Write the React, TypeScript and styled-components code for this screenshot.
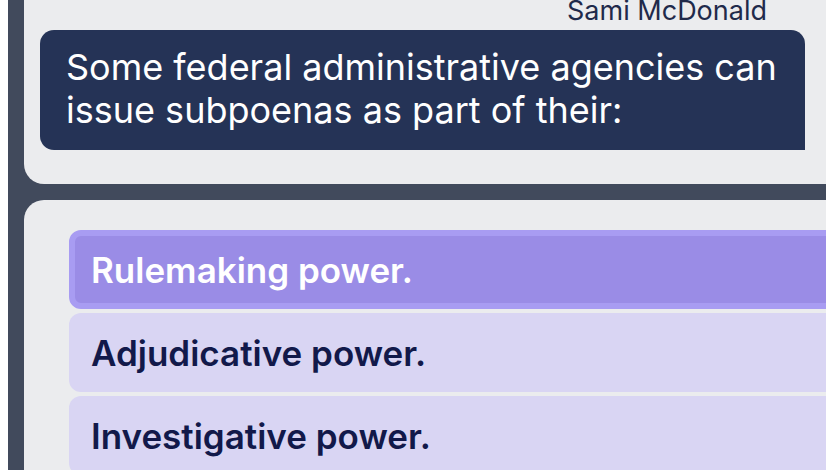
import { type FC } from 'react'
import styled, { createGlobalStyle } from 'styled-components'

const GlobalStyle = createGlobalStyle`
  html,
  body {
    margin: 0;
    background: #ffffff;
    overflow: hidden;
  }

  body {
    padding-left: 8px;
    font-family: Inter, 'Noto Sans', 'Liberation Sans', sans-serif;
  }
`

const Shell = styled.div`
  display: flex;
  flex-direction: column;
  gap: 16px;
  width: 900px;
  min-height: 470px;
  padding-left: 16px;
  background: #414a5c;
`

const Card = styled.section`
  background: #ebecee;
  border-radius: 20px 0 0 20px;
`

const ChatCard = styled(Card)`
  margin-top: -40px;
  padding: 34px 0 34px 16px;
  display: flex;
  flex-direction: column;
`

const Sender = styled.div`
  width: 727px;
  margin-bottom: 3px;
  text-align: right;
  font-size: 27px;
  line-height: 33px;
  color: #1f2a4b;
`

const Bubble = styled.div`
  box-sizing: border-box;
  width: 765px;
  padding: 16px 20px 18px 26px;
  border-radius: 14px 14px 0 14px;
  background: #253356;
  color: #ffffff;
  font-size: 36px;
  line-height: 43px;
`

const AnswerCard = styled(Card)`
  flex: 1;
  padding: 30px 0 0 45px;
  border-radius: 20px 0 0 0;
  display: flex;
  flex-direction: column;
  gap: 4px;
`

const Option = styled.button<{ $selected?: boolean }>`
  box-sizing: border-box;
  display: flex;
  align-items: center;
  height: 79px;
  padding: 0 16px;
  border: 6px solid ${({ $selected }) => ($selected ? '#a89cf2' : 'transparent')};
  border-radius: 12px 0 0 12px;
  background: ${({ $selected }) => ($selected ? '#9a8ce6' : '#d9d5f3')};
  color: ${({ $selected }) => ($selected ? '#ffffff' : '#12194a')};
  font-family: inherit;
  font-size: 35px;
  font-weight: 600;
  text-align: left;
  cursor: pointer;
`

const options = ['Rulemaking power.', 'Adjudicative power.', 'Investigative power.']

const App: FC = () => (
  <>
    <GlobalStyle />
    <Shell>
      <ChatCard>
        <Sender>Sami McDonald</Sender>
        <Bubble>
          Some federal administrative agencies can issue subpoenas as part of their:
        </Bubble>
      </ChatCard>
      <AnswerCard>
        {options.map((label, i) => (
          <Option key={label} $selected={i === 0}>
            {label}
          </Option>
        ))}
      </AnswerCard>
    </Shell>
  </>
)

export default App
